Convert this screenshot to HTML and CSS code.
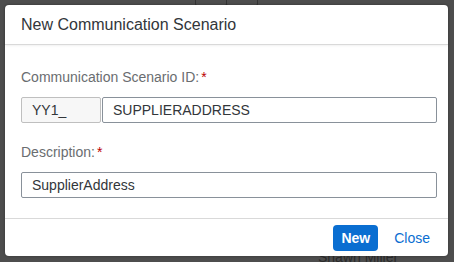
FILE: index.html
```html
<!DOCTYPE html>
<html lang="en">
<head>
  <meta charset="UTF-8">
  <title>New Communication Scenario</title>
  <link rel="stylesheet" href="styles.css">
</head>
<body>

<div class="backdrop">
  <div class="bg-tools"><span class="tool"></span><span class="tool"></span></div>
  <div class="bg-name">Shawn Miller</div>
</div>

<div class="dialog">
  <header class="dlg-head">New Communication Scenario</header>

  <div class="dlg-body">
    <label class="field-label">Communication Scenario ID:<span class="req">*</span></label>
    <div class="id-row">
      <div class="prefix">YY1_</div>
      <div class="input">SUPPLIERADDRESS</div>
    </div>

    <label class="field-label">Description:<span class="req">*</span></label>
    <div class="input">SupplierAddress</div>
  </div>

  <footer class="dlg-foot">
    <button class="btn-primary">New</button>
    <button class="btn-link">Close</button>
  </footer>
</div>

</body>
</html>
```

FILE: styles.css
```css
* {
  box-sizing: border-box;
}

body {
  margin: 0;
  height: 262px;
  overflow: hidden;
  background: #4d4d4d;
  font-family: 'Liberation Sans', Arial, sans-serif;
  position: relative;
}

/* page behind the overlay */
.backdrop {
  position: absolute;
  inset: 0;
  color: #2a2a2a;
  font-size: 14px;
}

.bg-tools {
  position: absolute;
  top: -4px;
  left: 195px;
  display: flex;
}

.tool {
  width: 32px;
  height: 10px;
  border: 1px solid #333;
  border-radius: 2px;
  margin-right: -1px;
}

.bg-name {
  position: absolute;
  left: 318px;
  top: 249px;
}

.dialog {
  position: relative;
  margin: 5px 0 0 5px;
  width: 443px;
  height: 251px;
  background: #fff;
  border-radius: 4px;
  display: flex;
  flex-direction: column;
  box-shadow: 0 0 3px rgba(0,0,0,0.3);
}

.dlg-head {
  height: 40px;
  padding: 0 16px;
  display: flex;
  align-items: center;
  font-size: 16px;
  color: #32363a;
  border-bottom: 1px solid #d9d9d9;
  box-shadow: 0 1px 2px rgba(0,0,0,0.06);
}

.dlg-body {
  flex: 1;
  padding: 23px 11px 0 16px;
}

.field-label {
  display: block;
  font-size: 14px;
  line-height: 18px;
  color: #6a6d70;
  margin-bottom: 11px;
}

.req {
  color: #bb0000;
  margin-left: 2px;
}

.id-row {
  display: flex;
  margin-bottom: 20px;
}

.prefix,
.input {
  height: 26px;
  border: 1px solid #89919a;
  border-radius: 2px;
  padding: 0 10px;
  font-size: 14px;
  line-height: 24px;
  color: #32363a;
}

.prefix {
  width: 80px;
  background: #f7f7f7;
  border-color: #bfbfbf;
  margin-right: 1px;
}

.id-row .input {
  flex: 1;
}

.dlg-foot {
  height: 38px;
  border-top: 1px solid #d9d9d9;
  display: flex;
  align-items: center;
  justify-content: flex-end;
  gap: 8px;
  padding: 0 10px;
}

button {
  font-family: inherit;
  font-size: 14px;
  height: 26px;
  border: none;
  border-radius: 4px;
  padding: 0 8px;
  cursor: pointer;
}

.btn-primary {
  background: #0a6ed1;
  color: #fff;
  font-weight: bold;
}

.btn-link {
  background: none;
  color: #0a6ed1;
}
```
